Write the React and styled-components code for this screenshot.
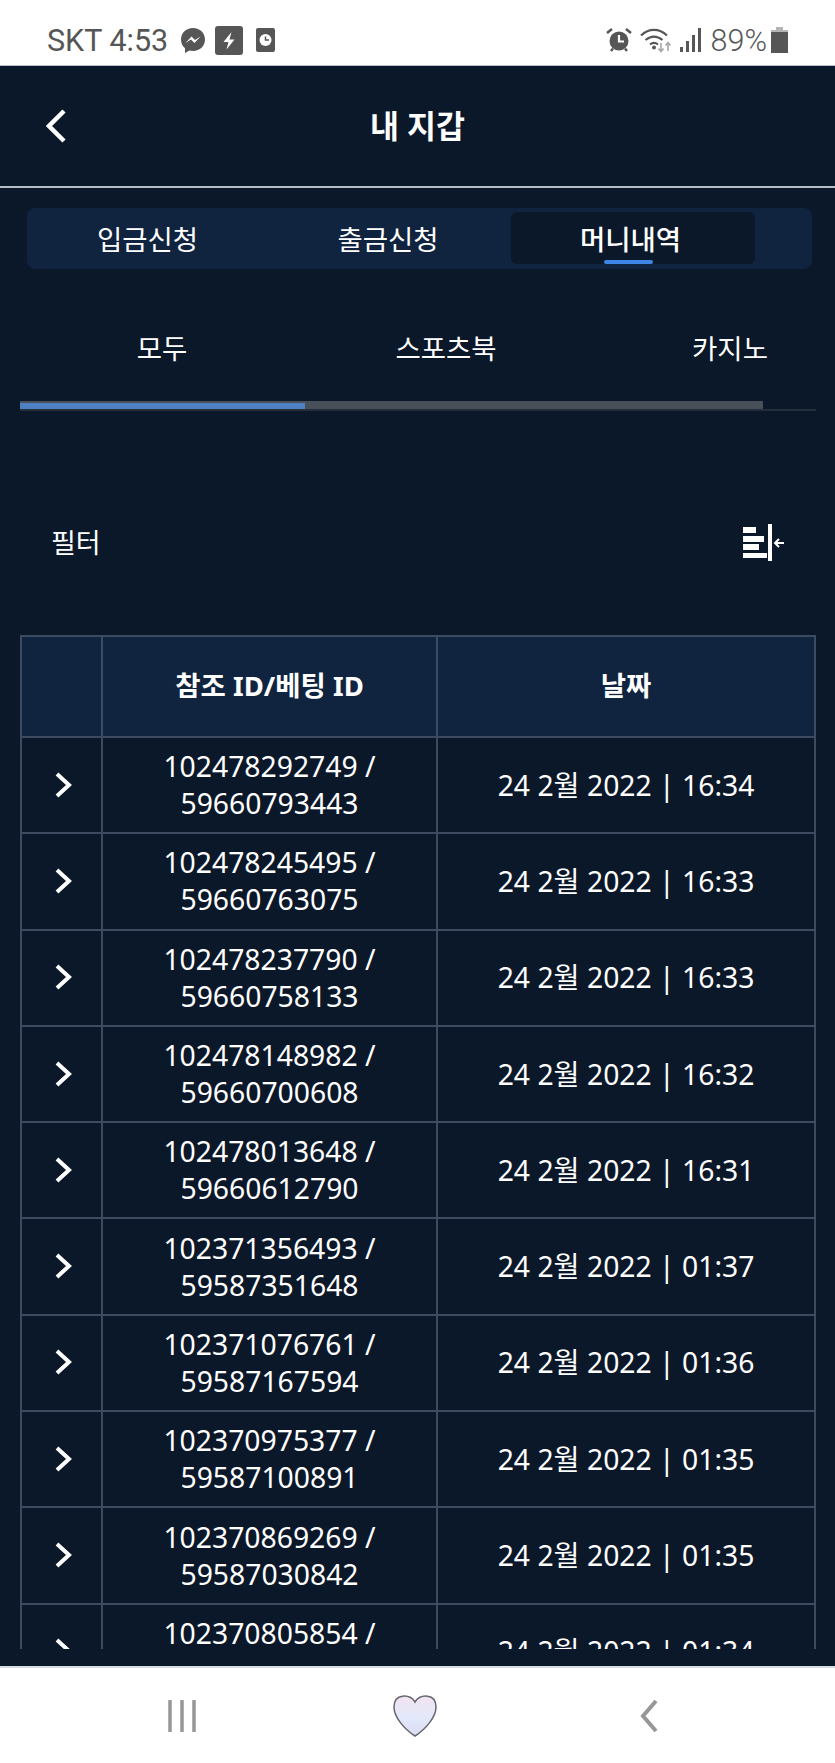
import styled, { createGlobalStyle } from "styled-components";

const GlobalStyle = createGlobalStyle`
  html, body { margin: 0; padding: 0; background: #0b1829; }
  body { font-family: "Noto Sans", "Noto Sans CJK KR", sans-serif; }
`;

const Page = styled.div`
  width: 835px;
  height: 1763px;
  display: flex;
  flex-direction: column;
  background: #0b1829;
  color: #fff;
  overflow: hidden;
`;

const StatusBar = styled.div`
  height: 66px;
  box-sizing: border-box;
  flex: none;
  display: flex;
  align-items: center;
  justify-content: space-between;
  padding: 15px 47px 0;
  background: #fff;
  color: #565656;
  font-family: Roboto, sans-serif;
  font-size: 30.5px;
  border-bottom: 1px solid #b9c0c8;
`;

const StatusGroup = styled.div`
  display: flex;
  align-items: center;
  gap: ${(p) => p.$gap || 8}px;
`;

const CarrierText = styled.span`
  margin-right: 3px;
`;

const BatteryText = styled.span`
  margin: 0 -4px 0 2px;
  font-weight: 300;
`;

const ClockSvg = styled.svg`
  margin-left: 4px;
`;

const Header = styled.header`
  height: 120px;
  box-sizing: content-box;
  flex: none;
  position: relative;
  display: flex;
  align-items: center;
  justify-content: center;
  border-bottom: 2px solid #b4bcc8;
`;

const BackButton = styled.button`
  position: absolute;
  left: 46px;
  top: 43px;
  padding: 0;
  border: 0;
  background: none;
  display: flex;
`;

const Title = styled.h1`
  margin: 0 0 4px;
  font-size: 31.5px;
  font-weight: 700;
`;

const WalletTabs = styled.div`
  flex: none;
  margin: 20px 23px 0 27px;
  height: 61px;
  box-sizing: border-box;
  padding: 4px 57px 5px 0;
  display: grid;
  grid-template-columns: 241px 243px 244px;
  background: #10243f;
  border-radius: 8px;
`;

const WalletTab = styled.div`
  position: relative;
  display: flex;
  align-items: center;
  justify-content: center;
  padding: 0 ${(p) => p.$shift || 0}px 1px 0;
  font-size: 27.5px;
  border-radius: 6px;
  background: ${(p) => (p.$active ? "#0b1829" : "transparent")};
  font-weight: ${(p) => (p.$active ? 500 : 400)};
`;

const ActiveMark = styled.span`
  position: absolute;
  left: 93px;
  bottom: 0;
  width: 49px;
  height: 4px;
  border-radius: 2px;
  background: #3f85e6;
`;

const ProductStrip = styled.div`
  flex: none;
  margin: 39px 19px 0 20px;
  overflow: hidden;
  border-bottom: 2px solid #252f3c;
`;

const ProductTabs = styled.div`
  display: flex;
  width: 852px;
  height: 78px;
  margin-bottom: 15px;
`;

const ProductTab = styled.div`
  flex: 0 0 284px;
  display: flex;
  align-items: center;
  justify-content: center;
  font-size: 27.5px;
`;

const ScrollTrack = styled.div`
  width: 743px;
  height: 8px;
  display: flex;
  align-items: flex-end;
  background: #474f59;
`;

const ScrollThumb = styled.div`
  width: 285px;
  height: 6px;
  background: #4f80c2;
`;

const FilterRow = styled.div`
  flex: none;
  height: 38px;
  margin-top: 113px;
  padding: 0 50px 0 51px;
  display: flex;
  align-items: center;
  justify-content: space-between;
  font-size: 27px;
`;

const FilterLabel = styled.span`
  margin-bottom: 3px;
`;

const TableClip = styled.div`
  flex: none;
  height: 1014px;
  margin: 73px 19px 0 20px;
  overflow: hidden;
`;

const Table = styled.table`
  width: 796px;
  table-layout: fixed;
  border-collapse: collapse;
  border: 2px solid #3c4b60;
`;

const HeadCell = styled.th`
  height: 94px;
  padding: 0 0 5px;
  border: 2px solid #3c4b60;
  background: #10243f;
  font-size: 27.5px;
  font-weight: 700;
  width: ${(p) => p.$width}px;
`;

const Cell = styled.td`
  height: 93.3px;
  padding: 0 10px;
  border: 2px solid #3c4b60;
  text-align: center;
  font-size: 28.3px;
  line-height: 37px;
  font-weight: 400;
`;

const ExpandCell = styled(Cell)`
  padding: 0 0 1px;
  svg {
    display: block;
    margin: 0 0 0 33px;
  }
`;

const NavBar = styled.nav`
  margin-top: 17px;
  flex: 1;
  display: flex;
  align-items: center;
  background: #fff;
  border-top: 2px solid #d4dce2;
`;

const NavSlot = styled.div`
  flex: none;
  width: ${(p) => p.$width}px;
  display: flex;
  justify-content: flex-end;
`;

const Messenger = () => (
  <svg width="26" height="27" viewBox="0 0 26 27">
    <path d="M13 1C6 1 1 6 1 12.6c0 3.6 1.5 6.6 4 8.6V26l4.4-2.4c1.1.3 2.3.5 3.6.5 7 0 12-5 12-11.5S20 1 13 1z" fill="#565656" />
    <path d="M5.5 16l6-6.5 3.5 3.5 5.5-3.5-6 6.5-3.5-3.5z" fill="#fff" />
  </svg>
);

const BoltBadge = () => (
  <svg width="28" height="29" viewBox="0 0 28 29">
    <rect width="28" height="29" rx="3" fill="#565656" />
    <path d="M16.5 6L8.5 16h5l-2 7.5 8-10h-5z" fill="#fff" />
  </svg>
);

const ClockBadge = () => (
  <ClockSvg width="19" height="24" viewBox="0 0 19 24">
    <rect width="19" height="24" rx="2" fill="#565656" />
    <circle cx="9.5" cy="12" r="6" fill="#fff" />
    <path d="M9.5 8.5V12h3.5" fill="none" stroke="#565656" strokeWidth="1.5" />
  </ClockSvg>
);

const AlarmIcon = () => (
  <svg width="26" height="26" viewBox="0 0 26 26">
    <circle cx="13" cy="14" r="9.5" fill="#565656" />
    <path d="M1 6l5-4M25 6l-5-4M5 24l2-2.5M21 24l-2-2.5" stroke="#565656" strokeWidth="2.5" fill="none" />
    <path d="M13 8v6.5h5" stroke="#fff" strokeWidth="2.2" fill="none" />
  </svg>
);

const WifiIcon = () => (
  <svg width="32" height="26" viewBox="0 0 32 26">
    <path d="M1 8.5C9 1 19 1 27 8.5M5.5 13c5.5-4.5 11.5-4.5 17 0M10 17.5c2.5-2 5.5-2 8 0" fill="none" stroke="#565656" strokeWidth="2.2" />
    <circle cx="14" cy="20.5" r="2" fill="#565656" />
    <path d="M21 16v8M18.5 21.5l2.5 3 2.5-3" stroke="#a8a8a8" strokeWidth="1.6" fill="none" />
    <path d="M28 24v-8M25.5 18.5l2.5-3 2.5 3" stroke="#a8a8a8" strokeWidth="1.6" fill="none" />
  </svg>
);

const SignalIcon = () => (
  <svg width="21" height="24" viewBox="0 0 21 24">
    <rect x="0" y="19" width="3" height="5" fill="#565656" />
    <rect x="6" y="13" width="3" height="11" fill="#565656" />
    <rect x="12" y="7" width="3" height="17" fill="#565656" />
    <rect x="18" y="0" width="3" height="24" fill="#565656" />
  </svg>
);

const BatteryIcon = () => (
  <svg width="17" height="26" viewBox="0 0 17 26">
    <rect x="5" y="0" width="7" height="4" fill="#b5b5b5" />
    <rect x="0" y="3" width="17" height="3" fill="#b5b5b5" />
    <rect x="0" y="5" width="17" height="21" fill="#565656" />
  </svg>
);

const Chevron = ({ dir, size, height, color, weight }) => (
  <svg width={size} height={height} viewBox={`0 0 ${size} ${height}`}>
    <path
      d={dir === "left"
        ? `M${size - 2} 2L3 ${height / 2}L${size - 2} ${height - 2}`
        : `M2 2L${size - 3} ${height / 2}L2 ${height - 2}`}
      fill="none"
      stroke={color}
      strokeWidth={weight}
    />
  </svg>
);

const ColumnsIcon = () => (
  <svg width="43" height="38" viewBox="0 0 43 38">
    <g fill="#fff">
      <rect x="1" y="3" width="13" height="6" />
      <rect x="1" y="12" width="21" height="6" />
      <rect x="1" y="20" width="16" height="6" />
      <rect x="1" y="29" width="24" height="5" />
      <rect x="26" y="0" width="4" height="37" />
    </g>
    <path d="M42 19H33M37 15L33 19l4 4" fill="none" stroke="#fff" strokeWidth="2" />
  </svg>
);

const MenuIcon = () => (
  <svg width="30" height="32" viewBox="0 0 30 32">
    <path d="M3 1v30M15 1v30M27 1v30" stroke="#979797" strokeWidth="3.5" strokeLinecap="round" />
  </svg>
);

const HeartIcon = () => (
  <svg width="44" height="42" viewBox="0 0 44 42">
    <defs>
      <linearGradient id="heartFill" x1="0" y1="0" x2="0" y2="1">
        <stop offset="0" stopColor="#f3e3f2" />
        <stop offset="0.5" stopColor="#e3e9fa" />
        <stop offset="1" stopColor="#dcdcf6" />
      </linearGradient>
    </defs>
    <path
      d="M22 7C19 2 14 .8 9.5 1.2 4 1.8 1 6 1 12c0 10 10 22 21 29C33 34 43 22 43 12c0-6-3-10.2-8.5-10.8C30 .8 25 2 22 7z"
      fill="url(#heartFill)"
      stroke="#66666e"
      strokeWidth="1.5"
    />
  </svg>
);

const rows = [
  ["102478292749", "59660793443", "16:34"],
  ["102478245495", "59660763075", "16:33"],
  ["102478237790", "59660758133", "16:33"],
  ["102478148982", "59660700608", "16:32"],
  ["102478013648", "59660612790", "16:31"],
  ["102371356493", "59587351648", "01:37"],
  ["102371076761", "59587167594", "01:36"],
  ["102370975377", "59587100891", "01:35"],
  ["102370869269", "59587030842", "01:35"],
  ["102370805854", "59586987215", "01:34"],
];

const App = () => {
  return (
    <Page>
      <GlobalStyle />
      <StatusBar>
        <StatusGroup $gap={9}>
          <CarrierText>SKT 4:53</CarrierText>
          <Messenger />
          <BoltBadge />
          <ClockBadge />
        </StatusGroup>
        <StatusGroup $gap={8}>
          <AlarmIcon />
          <WifiIcon />
          <SignalIcon />
          <BatteryText>89%</BatteryText>
          <BatteryIcon />
        </StatusGroup>
      </StatusBar>

      <Header>
        <BackButton>
          <Chevron dir="left" size={20} height={34} color="#fff" weight={4.5} />
        </BackButton>
        <Title>내 지갑</Title>
      </Header>

      <WalletTabs>
        <WalletTab>입금신청</WalletTab>
        <WalletTab $shift={3}>출금신청</WalletTab>
        <WalletTab $active $shift={5}>
          머니내역
          <ActiveMark />
        </WalletTab>
      </WalletTabs>

      <ProductStrip>
        <ProductTabs>
          <ProductTab>모두</ProductTab>
          <ProductTab>스포츠북</ProductTab>
          <ProductTab>카지노</ProductTab>
        </ProductTabs>
        <ScrollTrack>
          <ScrollThumb />
        </ScrollTrack>
      </ProductStrip>

      <FilterRow>
        <FilterLabel>필터</FilterLabel>
        <ColumnsIcon />
      </FilterRow>

      <TableClip>
        <Table>
          <thead>
            <tr>
              <HeadCell $width={79} />
              <HeadCell $width={333}>참조 ID/베팅 ID</HeadCell>
              <HeadCell>날짜</HeadCell>
            </tr>
          </thead>
          <tbody>
            {rows.map(([ref, bet, time]) => (
              <tr key={ref}>
                <ExpandCell>
                  <Chevron dir="right" size={17} height={26} color="#fff" weight={4} />
                </ExpandCell>
                <Cell>
                  {ref} / {bet}
                </Cell>
                <Cell>24 2월 2022 | {time}</Cell>
              </tr>
            ))}
          </tbody>
        </Table>
      </TableClip>

      <NavBar>
        <NavSlot $width={197}>
          <MenuIcon />
        </NavSlot>
        <NavSlot $width={240}>
          <HeartIcon />
        </NavSlot>
        <NavSlot $width={221}>
          <Chevron dir="left" size={18} height={34} color="#979797" weight={4} />
        </NavSlot>
      </NavBar>
    </Page>
  );
};

export default App;
